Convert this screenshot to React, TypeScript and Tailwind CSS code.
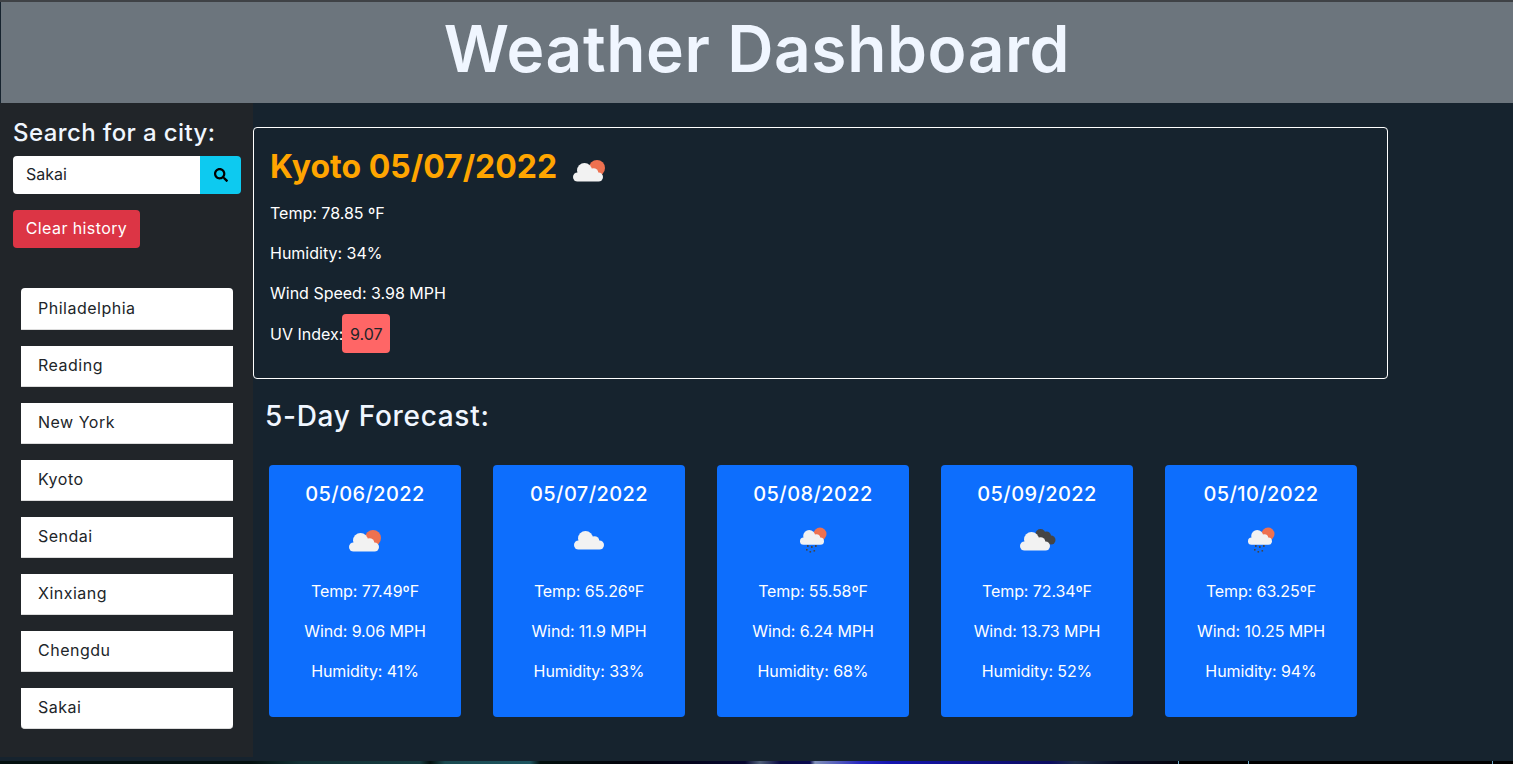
import { FaSearch } from 'react-icons/fa'

const CITIES = ['Philadelphia', 'Reading', 'New York', 'Kyoto', 'Sendai', 'Xinxiang', 'Chengdu', 'Sakai']

type Kind = 'sun' | 'cloud' | 'rain' | 'dark'

const FORECAST: { date: string; kind: Kind; temp: string; wind: string; humidity: string }[] = [
  { date: '05/06/2022', kind: 'sun', temp: '77.49', wind: '9.06', humidity: '41' },
  { date: '05/07/2022', kind: 'cloud', temp: '65.26', wind: '11.9', humidity: '33' },
  { date: '05/08/2022', kind: 'rain', temp: '55.58', wind: '6.24', humidity: '68' },
  { date: '05/09/2022', kind: 'dark', temp: '72.34', wind: '13.73', humidity: '52' },
  { date: '05/10/2022', kind: 'rain', temp: '63.25', wind: '10.25', humidity: '94' },
]

// cloud shape, drawn from bumps on a rounded base
function Cloud({ x, y, w, fill }: { x: number; y: number; w: number; fill: string }) {
  const s = w / 30
  return (
    <g transform={`translate(${x} ${y}) scale(${s})`} fill={fill}>
      <rect x="0" y="9.5" width="30" height="9" rx="4.5" />
      <circle cx="11.5" cy="7.5" r="7.5" />
      <circle cx="20.5" cy="10" r="4.8" />
    </g>
  )
}

function WeatherIcon({ kind }: { kind: Kind }) {
  return (
    <svg width="50" height="50" viewBox="0 0 50 50" className="shrink-0">
      {kind === 'sun' && (
        <>
          <circle cx="33" cy="22" r="8" fill="#ee7150" />
          <Cloud x={9} y={17} w={30} fill="#f2f2f2" />
        </>
      )}
      {kind === 'cloud' && <Cloud x={10} y={15} w={30} fill="#f2f2f2" />}
      {kind === 'rain' && (
        <>
          <circle cx="32" cy="18" r="6.5" fill="#ee7150" />
          <Cloud x={12} y={14} w={24} fill="#f2f2f2" />
          <g fill="#454545">
            <rect x="19" y="29" width="1.6" height="2" />
            <rect x="23" y="30" width="1.6" height="2" />
            <rect x="27" y="29" width="1.6" height="2" />
            <rect x="18" y="33" width="1.6" height="1.6" />
            <rect x="21.5" y="35" width="1.6" height="1.6" />
            <rect x="25.5" y="34" width="1.6" height="1.6" />
          </g>
        </>
      )}
      {kind === 'dark' && (
        <>
          <g fill="#454545">
            <circle cx="28.5" cy="18" r="5" />
            <circle cx="34.5" cy="20" r="4.5" />
            <circle cx="39" cy="24" r="4.5" />
            <rect x="26" y="20" width="14" height="8" />
          </g>
          <Cloud x={8} y={16} w={30} fill="#f2f2f2" />
        </>
      )}
    </svg>
  )
}

export default function App() {
  return (
    <div className="h-[764px] overflow-hidden flex flex-col bg-[#16232e] text-white font-[Inter,sans-serif]">
      <div className="h-[2px] bg-[#3f4246]" />
      <header className="h-[101px] shrink-0 ml-px bg-[#6c757d] flex items-center justify-center">
        <h1 className="text-[64px] font-semibold leading-none text-[#f0f6ff] tracking-[0.6px] pb-2">Weather Dashboard</h1>
      </header>

      <div className="flex items-start">
        <aside className="w-[253px] h-[654px] shrink-0 bg-[#212529] pl-[13px] pt-[16px]">
          <h2 className="text-[24px] leading-[28px] font-medium text-[#f0f6ff] tracking-[0.4px]">Search for a city:</h2>
          <div className="mt-[9px] flex h-[38px] w-[228px] rounded overflow-hidden">
            <input
              defaultValue="Sakai"
              className="flex-1 min-w-0 bg-white px-[13px] pb-[3px] text-base text-[#212529] outline-none"
            />
            <button className="w-[41px] bg-[#0dcaf0] flex items-center justify-center text-black">
              <FaSearch size={14} />
            </button>
          </div>
          <button className="mt-4 h-[38px] w-[127px] pb-[3px] rounded bg-[#dc3545] text-base text-white tracking-[0.4px]">
            Clear history
          </button>

          <ul className="mt-10 ml-2 w-[212px] flex flex-col gap-4">
            {CITIES.map((city, i) => (
              <li
                key={city}
                className={`bg-white text-[#212529] pl-[17px] flex items-center border-b border-[#dcdcdc] tracking-[0.5px] ${
                  i === 0 ? 'h-[42px] pb-px rounded-t' : 'h-[41px] pb-[3px]'
                } ${i === CITIES.length - 1 ? 'rounded-b' : ''}`}
              >
                {city}
              </li>
            ))}
          </ul>
        </aside>

        <main className="flex-1 pt-6">
          <section className="w-[1135px] h-[252px] rounded border border-white pl-[16px] pt-[18px]">
            <div className="flex items-center gap-[7px]">
              <h2 className="text-[32px] leading-none font-bold text-[#ffa500] pb-[9px]">Kyoto 05/07/2022</h2>
              <WeatherIcon kind="sun" />
            </div>
            <div className="mt-[5px] flex flex-col gap-4 leading-6">
              <p>Temp: 78.85 ºF</p>
              <p>Humidity: 34%</p>
              <p>Wind Speed: 3.98 MPH</p>
            </div>
            <p className="flex items-center mt-[9px] leading-6">
              UV Index:
              <span className="-ml-px h-[39px] w-[48px] rounded flex items-center justify-center bg-[#ff6666] text-[#212529]">
                9.07
              </span>
            </p>
          </section>

          <h2 className="mt-[19px] ml-[12px] text-[28px] leading-[36px] font-medium text-[#f0f6ff] tracking-[0.7px]">
            5-Day Forecast:
          </h2>

          <div className="mt-[31px] ml-4 flex gap-8">
            {FORECAST.map((day) => (
              <div key={day.date} className="w-[192px] h-[252px] rounded bg-[#0d6efd] flex flex-col items-center pt-[17px]">
                <h3 className="text-[20px] leading-6 font-medium tracking-[0.4px]">{day.date}</h3>
                <div className="mt-[10px]">
                  <WeatherIcon kind={day.kind} />
                </div>
                <div className="mt-[13px] flex flex-col gap-4 leading-6 tracking-[-0.1px]">
                  <p className="text-center">Temp: {day.temp}ºF</p>
                  <p className="text-center">Wind: {day.wind} MPH</p>
                  <p className="text-center">Humidity: {day.humidity}%</p>
                </div>
              </div>
            ))}
          </div>
        </main>
      </div>

      {/* desktop wallpaper peeking out under the page */}
      <div className="h-[3px] mt-[4px] shrink-0 bg-[linear-gradient(90deg,#04100f_0px,#04100f_250px,#123034_300px,#163c40_420px,#03100e_430px,#1a4a50_445px,#1d5560_530px,#03100e_540px,#02020c_640px,#060630_745px,#50607a_760px,#0a0a44_780px,#0a0a50_810px,#8090b8_815px,#2828c0_860px,#1414b0_890px,#0c0c60_1050px,#1c2c48_1075px,#080c24_1120px,#04040c_1178px,#6aa8c8_1178px,#6aa8c8_1179px,#000_1179px,#000_1248px,#6aa8c8_1248px,#6aa8c8_1249px,#000_1249px,#000_1492px,#6aa8c8_1492px,#6aa8c8_1493px,#000_1493px)]" />
    </div>
  )
}
